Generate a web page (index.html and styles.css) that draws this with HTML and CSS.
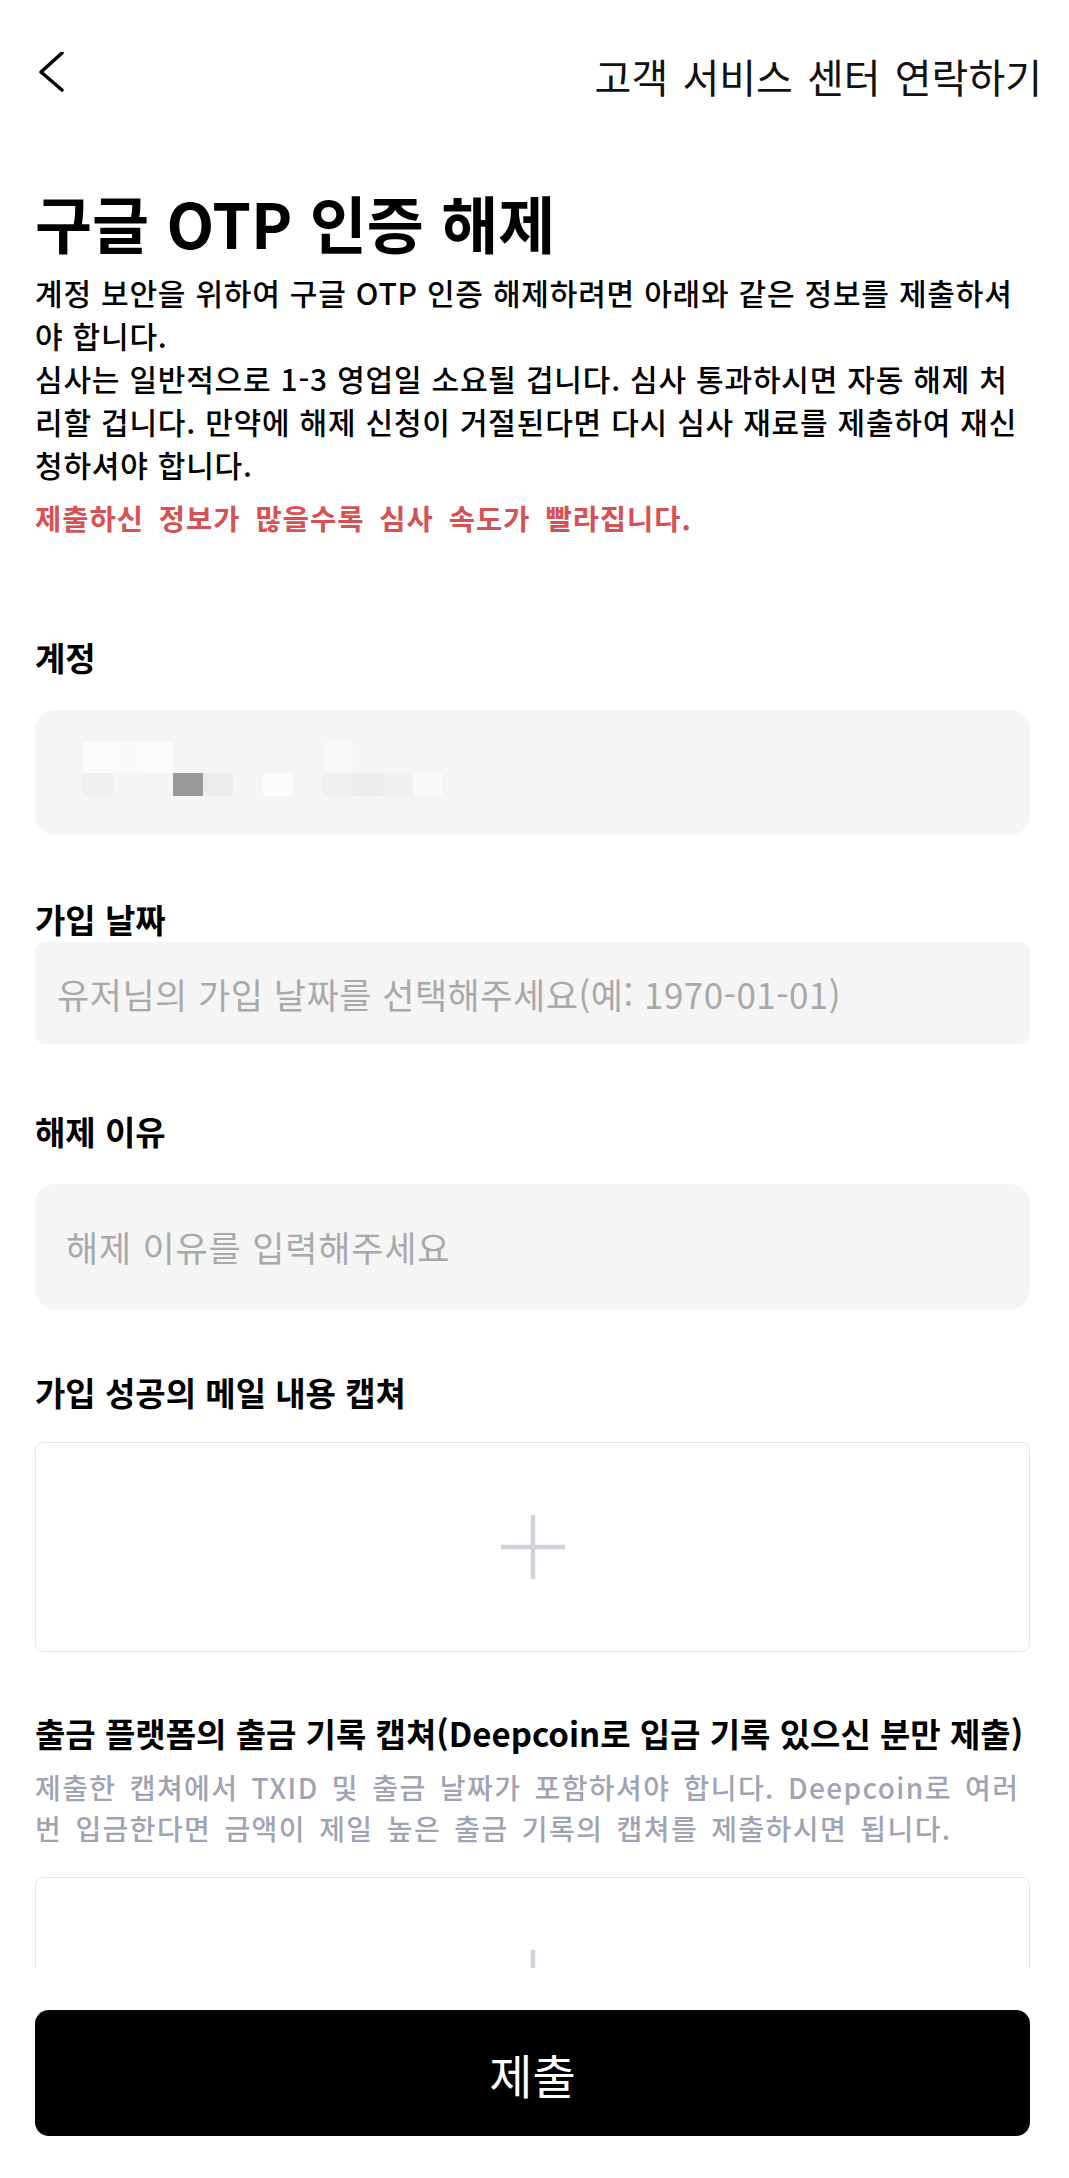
FILE: index.html
```html
<!DOCTYPE html>
<html lang="ko">
<head>
    <meta charset="UTF-8">
    <meta name="viewport" content="width=device-width, initial-scale=1.0">
    <title>구글 OTP 인증 해제</title>
    <link rel="stylesheet" href="styles.css">
</head>
<body>
    <div class="screen">
        <div class="scroll">
            <div class="topbar">
                <button class="back-btn" aria-label="뒤로">
                    <svg width="28" height="48" viewBox="0 0 28 48">
                        <path d="M24 1 L3 20 L24 38" fill="none" stroke="#000" stroke-width="3.5" stroke-linecap="round" stroke-linejoin="round"/>
                    </svg>
                </button>
                <a class="contact-link" href="#">고객 서비스 센터 연락하기</a>
            </div>

            <div class="content">
                <h1 class="page-title">구글 OTP 인증 해제</h1>
                <!-- line breaks follow the app's fixed-width wrapping -->
                <p class="intro">계정 보안을 위하여 구글 OTP 인증 해제하려면 아래와 같은 정보를 제출하셔<br>야 합니다.<br>심사는 일반적으로 1-3 영업일 소요될 겁니다. 심사 통과하시면 자동 해제 처<br>리할 겁니다. 만약에 해제 신청이 거절된다면 다시 심사 재료를 제출하여 재신<br>청하셔야 합니다.</p>
                <p class="notice">제출하신 정보가 많을수록 심사 속도가 빨라집니다.</p>

                <div class="group group-account">
                    <div class="label">계정</div>
                    <div class="field field-account">
                        <div class="mosaic">
                            <div class="mosaic-row row-top">
                                <span class="c1"></span><span class="c2"></span><span class="c1"></span><span></span><span></span><span></span><span></span><span></span><span class="c3"></span>
                            </div>
                            <div class="mosaic-row row-bottom">
                                <span class="c4"></span><span></span><span></span><span class="c6"></span><span class="c5"></span><span></span><span class="c1"></span><span></span><span class="c4"></span><span class="c5"></span><span class="c4"></span><span class="c2"></span>
                            </div>
                        </div>
                    </div>
                </div>

                <div class="group group-date">
                    <div class="label">가입 날짜</div>
                    <input class="field field-date" type="text" placeholder="유저님의 가입 날짜를 선택해주세요(예: 1970-01-01)">
                </div>

                <div class="group group-reason">
                    <div class="label">해제 이유</div>
                    <input class="field field-reason" type="text" placeholder="해제 이유를 입력해주세요">
                </div>

                <div class="group group-mail">
                    <div class="label">가입 성공의 메일 내용 캡쳐</div>
                    <div class="upload">
                        <svg width="64" height="64" viewBox="0 0 64 64">
                            <path d="M32 0 V64 M0 32 H64" stroke="#cfd2dc" stroke-width="4.5"/>
                        </svg>
                    </div>
                </div>

                <div class="group group-withdraw">
                    <div class="label label-long">출금 플랫폼의 출금 기록 캡쳐(Deepcoin로 입금 기록 있으신 분만 제출)</div>
                    <p class="hint">제출한 캡쳐에서 TXID 및 출금 날짜가 포함하셔야 합니다. Deepcoin로 여러 번 입금한다면 금액이 제일 높은 출금 기록의 캡쳐를 제출하시면 됩니다.</p>
                    <div class="upload">
                        <svg width="64" height="64" viewBox="0 0 64 64">
                            <path d="M32 0 V64 M0 32 H64" stroke="#cfd2dc" stroke-width="4.5"/>
                        </svg>
                    </div>
                </div>
            </div>
        </div>

        <div class="footer">
            <button class="submit-btn">제출</button>
        </div>
    </div>
</body>
</html>
```

FILE: styles.css
```css
html, body {
    margin: 0;
    padding: 0;
    background-color: #fff;
}
body {
    font-family: "Noto Sans CJK KR", sans-serif;
    color: #000;
}
.screen {
    height: 100vh;
    display: flex;
    flex-direction: column;
}
.scroll {
    flex: 1;
    overflow: hidden;
}
.topbar {
    display: flex;
    justify-content: space-between;
    align-items: center;
    height: 80px;
    margin-top: 36px;
    padding: 0 27px 0 38px;
}
.back-btn {
    display: flex;
    padding: 0;
    border: none;
    background: none;
}
.contact-link {
    font-size: 40px;
    word-spacing: 3px;
    color: #111;
    text-decoration: none;
}
.content {
    padding: 0 39px 0 35px;
}
.page-title {
    margin: 69px 0 0;
    font-size: 62px;
    line-height: 75px;
    font-weight: 700;
}
.intro {
    margin: 11px 0 0;
    font-size: 30px;
    line-height: 43px;
    letter-spacing: 0.8px;
    font-weight: 500;
}
.notice {
    margin: 12px 0 0;
    font-size: 28.5px;
    line-height: 40px;
    letter-spacing: 1px;
    word-spacing: 6px;
    font-weight: 700;
    color: #d65054;
}
.label {
    font-size: 33px;
    line-height: 40px;
    font-weight: 700;
}
.label-long {
    white-space: nowrap;
}
.field {
    display: block;
    width: 100%;
    box-sizing: border-box;
    border: none;
    outline: none;
    background-color: #f5f5f5;
    font-family: inherit;
}
.field::placeholder {
    color: #a9a9a9;
}
.group-account {
    margin-top: 99px;
}
.field-account {
    height: 125px;
    margin-top: 33px;
    padding: 32px 0 0 48px;
    border-radius: 20px;
}
.mosaic-row {
    display: flex;
}
.mosaic-row span {
    width: 30px;
}
.row-top {
    height: 31px;
}
.row-bottom {
    height: 23px;
}
.c1 { background-color: #fcfcfc; }
.c2 { background-color: #fafafa; }
.c3 { background-color: #f8f8f8; }
.c4 { background-color: #f0f0f0; }
.c5 { background-color: #ececec; }
.c6 { background-color: #999; }
.group-date {
    margin-top: 64px;
}
.field-date {
    height: 102px;
    margin-top: 3px;
    padding-left: 22px;
    border-radius: 10px;
    font-size: 35px;
    letter-spacing: 0.5px;
}
.group-reason {
    margin-top: 67px;
}
.field-reason {
    height: 125px;
    margin-top: 33px;
    padding-left: 31px;
    border-radius: 20px;
    font-size: 35px;
    letter-spacing: 0.8px;
}
.group-mail {
    margin-top: 63px;
}
.upload {
    display: flex;
    justify-content: center;
    align-items: center;
    height: 210px;
    margin-top: 30px;
    box-sizing: border-box;
    border: 1px solid #e6e6e6;
    border-radius: 8px;
}
.group-withdraw {
    margin-top: 61px;
}
.hint {
    margin: 14px 0 0;
    font-size: 28px;
    line-height: 41px;
    letter-spacing: 1.4px;
    word-spacing: 4px;
    font-weight: 500;
    color: #a0a4b2;
}
.group-withdraw .upload {
    margin-top: 28px;
}
.footer {
    padding: 42px 39px 42px 35px;
    background-color: #fff;
}
.submit-btn {
    display: block;
    width: 100%;
    height: 126px;
    border: none;
    border-radius: 14px;
    background-color: #000;
    color: #fff;
    font-family: inherit;
    font-size: 47px;
}
```
